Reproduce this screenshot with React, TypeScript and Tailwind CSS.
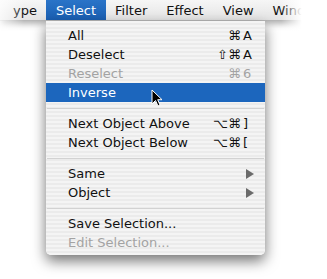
import React from "react"

type Item = {
  label: string
  mods?: string
  keyChar?: string
  disabled?: boolean
  active?: boolean
  submenu?: boolean
}

const groups: Item[][] = [
  [
    { label: "All", mods: "⌘", keyChar: "A" },
    { label: "Deselect", mods: "⇧⌘", keyChar: "A" },
    { label: "Reselect", mods: "⌘", keyChar: "6", disabled: true },
    { label: "Inverse", active: true },
  ],
  [
    { label: "Next Object Above", mods: "⌥⌘", keyChar: "]" },
    { label: "Next Object Below", mods: "⌥⌘", keyChar: "[" },
  ],
  [
    { label: "Same", submenu: true },
    { label: "Object", submenu: true },
  ],
  [
    { label: "Save Selection..." },
    { label: "Edit Selection...", disabled: true },
  ],
]

const barItems = ["Filter", "Effect", "View", "Wind"]

function MenuRow({ item }: { item: Item }) {
  const color = item.active
    ? "bg-[#1c66bd] text-white"
    : item.disabled
      ? "text-[#a3a3a3]"
      : "text-[#111]"

  return (
    <div className={`flex h-[19px] items-center pl-[22px] pr-[12px] ${color}`}>
      <span className="flex-1 whitespace-nowrap">{item.label}</span>
      {item.keyChar && (
        <span className="flex items-center">
          <span className="pr-[2px] text-right">{item.mods}</span>
          <span className="w-[10px]">{item.keyChar}</span>
        </span>
      )}
      {item.submenu && (
        <svg width="8" height="10" viewBox="0 0 8 10" className="mr-[-1px]">
          <path d="M0 0 L8 5 L0 10 Z" fill="#6b6b6b" />
        </svg>
      )}
    </div>
  )
}

export default function App() {
  return (
    <div className="relative h-[279px] w-[327px] overflow-hidden bg-white font-['DejaVu_Sans',sans-serif] text-[13px] leading-none">
      {/* menu bar */}
      <div className="relative z-0 flex h-[21px] items-stretch border-b border-[#b8b8b8] bg-[linear-gradient(#f6f6f6,#e4e4e4)] text-[#111] shadow-[0_3px_6px_rgba(0,0,0,0.3)]">
        <span className="flex items-center pl-[13px] pr-[9.5px]">ype</span>
        <span className="flex items-center bg-[linear-gradient(#2a74c8,#1a5fb2)] px-[9.5px] text-white">
          Select
        </span>
        {barItems.map((name) => (
          <span key={name} className="flex items-center px-[9.5px]">
            {name}
          </span>
        ))}
      </div>

      {/* dropdown */}
      <div className="relative z-10 ml-[46px] w-[219px] rounded-b-[5px] bg-[repeating-linear-gradient(#f4f4f4_0px,#f4f4f4_2px,#ebebeb_2px,#ebebeb_4px)] pt-[5px] pb-[3px] shadow-[0_6px_14px_rgba(0,0,0,0.55)]">
        {groups.map((group, gi) => (
          <div key={gi}>
            {gi > 0 && (
              <div className="flex h-[12px] items-center px-px">
                <div className="h-px w-full bg-[#d2d2d2]" />
              </div>
            )}
            {group.map((item) => (
              <MenuRow key={item.label} item={item} />
            ))}
          </div>
        ))}
      </div>

      {/* edge fades */}
      <div className="absolute left-0 top-0 z-20 h-[30px] w-[24px] bg-[linear-gradient(to_right,rgba(255,255,255,0.75),rgba(255,255,255,0))]" />
      <div className="absolute right-0 top-0 z-20 h-[32px] w-[46px] bg-[linear-gradient(to_right,rgba(255,255,255,0),#fff_45%)]" />

      {/* cursor */}
      <svg
        width="13"
        height="19"
        viewBox="0 0 13 19"
        className="absolute left-[151px] top-[89px] z-30"
      >
        <path
          d="M1 1 L1 15 L4.5 11.5 L7 17 L9 16 L6.7 10.7 L11 10.7 Z"
          fill="#000"
          stroke="#fff"
          strokeWidth="1"
          strokeLinejoin="round"
        />
      </svg>
    </div>
  )
}
